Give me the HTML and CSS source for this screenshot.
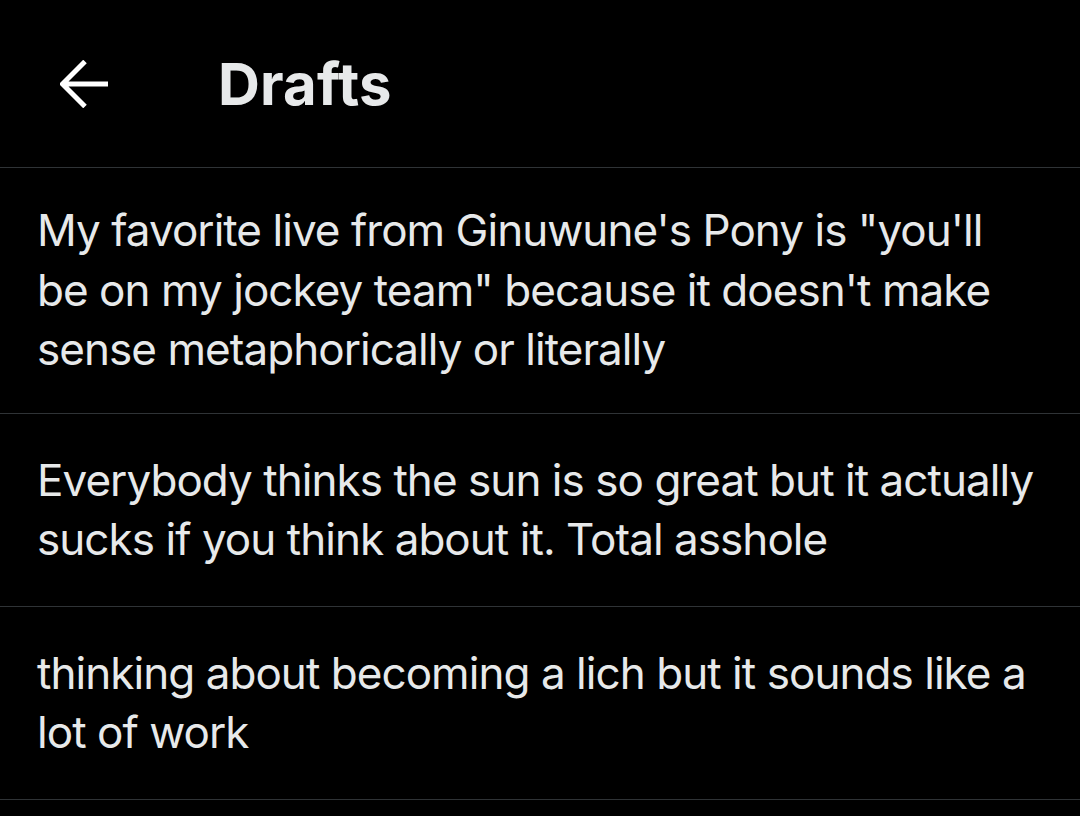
FILE: index.html
```html
<!DOCTYPE html>
<html lang="en">
<head>
<meta charset="utf-8">
<title>Drafts</title>
<link rel="stylesheet" href="styles.css">
</head>
<body>
<header class="topbar">
  <svg class="back" viewBox="0 0 48 48" width="48" height="48" aria-hidden="true">
    <path d="M2 24 H48 M25 1.5 L2.5 24 L25 46.5" fill="none" stroke="#ffffff" stroke-width="5"/>
  </svg>
  <h1 class="title">Drafts</h1>
</header>
<main class="drafts">
  <div class="draft draft-first">My favorite live from Ginuwune's Pony is "you'll<br>be on my jockey team" because it doesn't make<br>sense metaphorically or literally</div>
  <div class="draft">Everybody thinks the sun is so great but it actually<br>sucks if you think about it. Total asshole</div>
  <div class="draft">thinking about becoming a lich but it sounds like a<br>lot of work</div>
</main>
</body>
</html>
```

FILE: styles.css
```css
html, body {
  margin: 0;
  padding: 0;
  background: #000000;
}
body {
  font-family: Inter, "Noto Sans", "Liberation Sans", sans-serif;
  color: #e7e9ea;
  width: 1080px;
  height: 816px;
  overflow: hidden;
}
.topbar {
  display: flex;
  align-items: center;
  height: 167px;
  padding-left: 60px;
  border-bottom: 1px solid #2f3336;
}
.back {
  display: block;
  flex: none;
  margin-top: 1px;
}
.title {
  margin: 0 0 0 110px;
  font-size: 58px;
  font-weight: 700;
  line-height: 1;
  color: #e7e9ea;
  letter-spacing: 0.2px;
}
.draft {
  padding: 37px 37px 36px 37px;
  border-bottom: 1px solid #2f3336;
  font-size: 44px;
  line-height: 59.5px;
  letter-spacing: -0.95px;
  white-space: nowrap;
}
.draft-first {
  padding-top: 33px;
  padding-bottom: 33px;
}
```
